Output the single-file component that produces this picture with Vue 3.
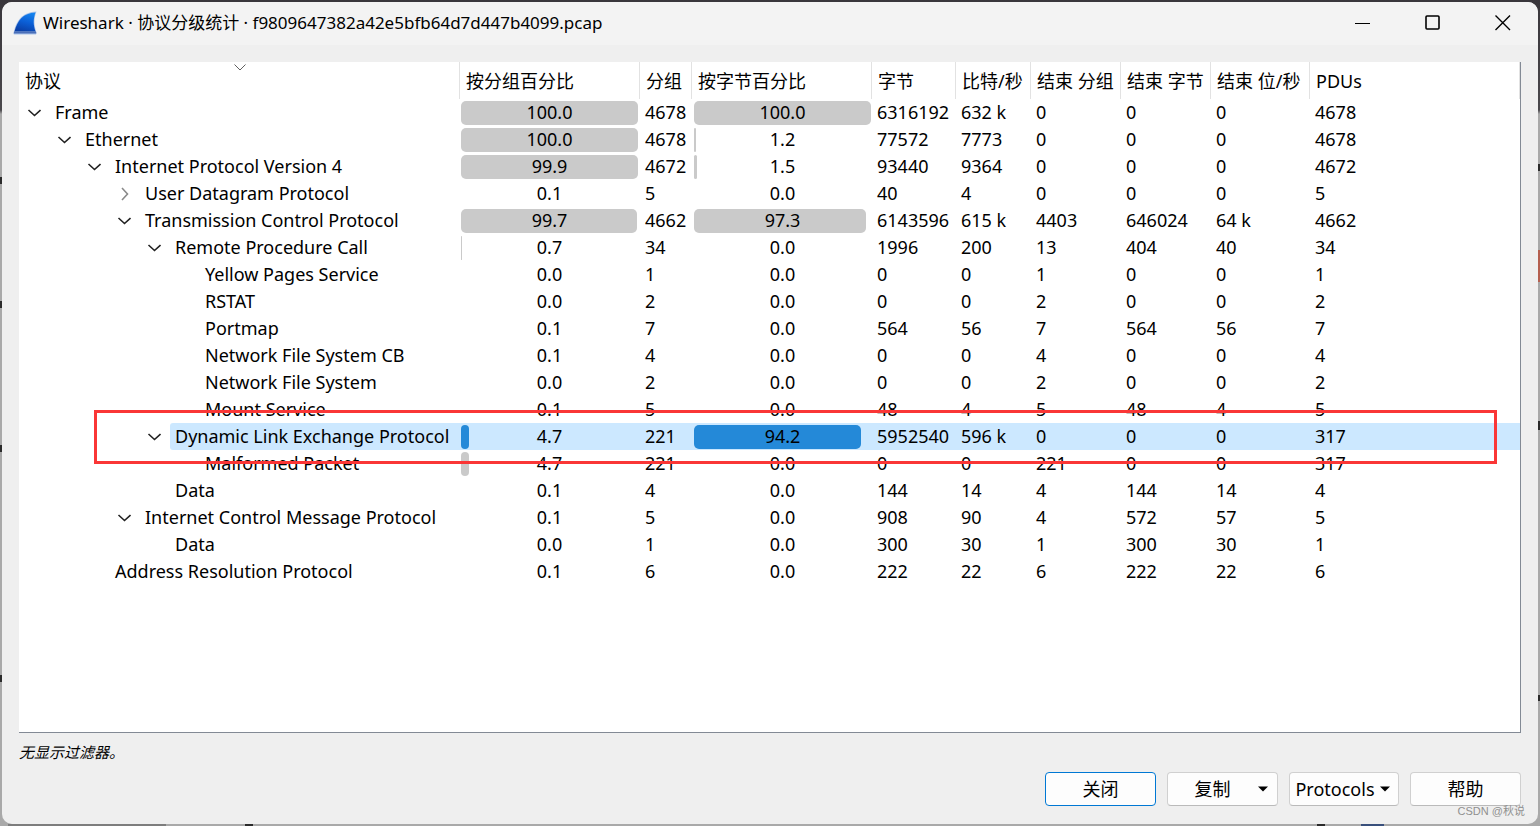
<script setup>
const columns = [
  { key: 'name', label: '协议' },
  { key: 'pctPackets', label: '按分组百分比' },
  { key: 'packets', label: '分组' },
  { key: 'pctBytes', label: '按字节百分比' },
  { key: 'bytes', label: '字节' },
  { key: 'bits', label: '比特/秒' },
  { key: 'endPackets', label: '结束 分组' },
  { key: 'endBytes', label: '结束 字节' },
  { key: 'endBits', label: '结束 位/秒' },
  { key: 'pdus', label: 'PDUs' },
]

// level, state, name, packet %, packets, byte %, bytes, bits/s, end packets, end bytes, end bits/s, PDUs
const rows = [
  [0, 'open', 'Frame', '100.0', '4678', '100.0', '6316192', '632 k', '0', '0', '0', '4678'],
  [1, 'open', 'Ethernet', '100.0', '4678', '1.2', '77572', '7773', '0', '0', '0', '4678'],
  [2, 'open', 'Internet Protocol Version 4', '99.9', '4672', '1.5', '93440', '9364', '0', '0', '0', '4672'],
  [3, 'closed', 'User Datagram Protocol', '0.1', '5', '0.0', '40', '4', '0', '0', '0', '5'],
  [3, 'open', 'Transmission Control Protocol', '99.7', '4662', '97.3', '6143596', '615 k', '4403', '646024', '64 k', '4662'],
  [4, 'open', 'Remote Procedure Call', '0.7', '34', '0.0', '1996', '200', '13', '404', '40', '34'],
  [5, '', 'Yellow Pages Service', '0.0', '1', '0.0', '0', '0', '1', '0', '0', '1'],
  [5, '', 'RSTAT', '0.0', '2', '0.0', '0', '0', '2', '0', '0', '2'],
  [5, '', 'Portmap', '0.1', '7', '0.0', '564', '56', '7', '564', '56', '7'],
  [5, '', 'Network File System CB', '0.1', '4', '0.0', '0', '0', '4', '0', '0', '4'],
  [5, '', 'Network File System', '0.0', '2', '0.0', '0', '0', '2', '0', '0', '2'],
  [5, '', 'Mount Service', '0.1', '5', '0.0', '48', '4', '5', '48', '4', '5'],
  [4, 'open', 'Dynamic Link Exchange Protocol', '4.7', '221', '94.2', '5952540', '596 k', '0', '0', '0', '317'],
  [5, '', 'Malformed Packet', '4.7', '221', '0.0', '0', '0', '221', '0', '0', '317'],
  [4, '', 'Data', '0.1', '4', '0.0', '144', '14', '4', '144', '14', '4'],
  [3, 'open', 'Internet Control Message Protocol', '0.1', '5', '0.0', '908', '90', '4', '572', '57', '5'],
  [4, '', 'Data', '0.0', '1', '0.0', '300', '30', '1', '300', '30', '1'],
  [2, '', 'Address Resolution Protocol', '0.1', '6', '0.0', '222', '22', '6', '222', '22', '6'],
].map(([level, state, name, ...values]) => ({ level, state, name, values }))

const selected = 12
const isPercent = (i) => i === 0 || i === 2
const barWidth = (v) => (Number(v) < 0.5 ? '0' : v + '%')
</script>

<template>
  <div class="desktop">
    <main class="window">
      <header class="titlebar">
        <svg class="logo" viewBox="0 0 24 24" aria-hidden="true">
          <defs>
            <linearGradient id="fin" x1="0.7" y1="0" x2="0.4" y2="1">
              <stop offset="0" stop-color="#1583ee" />
              <stop offset="0.5" stop-color="#0b5fd6" />
              <stop offset="1" stop-color="#0a3fa6" />
            </linearGradient>
          </defs>
          <path d="M0.5 22.5C3 10 9 1 23.5 0.5C20.5 8 21 14 23.5 21.5L23 23.5H1Z" fill="#a9c3ea" />
          <path d="M1.5 20.5C4.5 9.5 10 2 22.5 1.5C20 8.5 20.3 14 22.5 20.5Z" fill="url(#fin)" />
          <path d="M1 20.5H23L23.3 22.5H0.8Z" fill="#4b6fb8" />
        </svg>
        <h1>Wireshark · 协议分级统计 · f9809647382a42e5bfb64d7d447b4099.pcap</h1>
        <div class="controls">
          <button type="button" aria-label="最小化">
            <svg viewBox="0 0 16 16"><path d="M0 8.5H15" /></svg>
          </button>
          <button type="button" aria-label="最大化">
            <svg viewBox="0 0 16 16"><rect x="1" y="1" width="13" height="13" rx="1" stroke-width="1.6" /></svg>
          </button>
          <button type="button" aria-label="关闭窗口">
            <svg viewBox="0 0 16 16"><path d="M0.5 0.5L15 15M15 0.5L0.5 15" stroke-width="1.4" /></svg>
          </button>
        </div>
      </header>

      <section class="content">
        <div class="tree">
          <table>
            <colgroup>
              <col v-for="c in columns" :key="c.key" :class="c.key" />
            </colgroup>
            <thead>
              <tr>
                <th v-for="(c, i) in columns" :key="c.key" scope="col">
                  <span>{{ c.label }}</span>
                  <svg v-if="i === 0" class="sort" viewBox="0 0 12 7" aria-hidden="true">
                    <path d="M0.5 0.5L6 6L11.5 0.5" />
                  </svg>
                </th>
              </tr>
            </thead>
            <tbody>
              <tr v-for="(row, r) in rows" :key="r" :class="{ selected: r === selected }">
                <td class="protocol">
                  <div class="node" :class="'level-' + row.level">
                    <button v-if="row.state" type="button" :class="row.state" :aria-label="row.name" :aria-expanded="row.state === 'open'">
                      <svg viewBox="0 0 14 14" aria-hidden="true">
                        <path v-if="row.state === 'open'" d="M1.5 4L7.5 9.5L13.500 4" />
                        <path v-else d="M5 1L10.5 7L5 13" />
                      </svg>
                    </button>
                    <span v-else class="leaf"></span>
                    <span class="name">{{ row.name }}</span>
                  </div>
                </td>
                <td v-for="(v, i) in row.values" :key="i" :class="{ percent: isPercent(i), second: i === 2 }">
                  <div v-if="isPercent(i)" class="meter">
                    <div class="bar" :style="{ width: barWidth(v) }"></div>
                    <span>{{ v }}</span>
                  </div>
                  <template v-else>{{ v }}</template>
                </td>
              </tr>
            </tbody>
          </table>
          <div class="marker"></div>
        </div>

        <p class="note">无显示过滤器。</p>

        <footer class="actions">
          <button type="button" class="primary">关闭</button>
          <button type="button" class="menu wide">
            <span>复制</span>
            <svg viewBox="0 0 10 6" aria-hidden="true"><path d="M0 0.5H10L5 5.5Z" /></svg>
          </button>
          <button type="button" class="menu narrow">
            <span>Protocols</span>
            <svg viewBox="0 0 10 6" aria-hidden="true"><path d="M0 0.5H10L5 5.5Z" /></svg>
          </button>
          <button type="button">帮助</button>
        </footer>
      </section>
      <div class="watermark">CSDN @秋说</div>
    </main>
  </div>
</template>

<style>
body {
  background: #9c9c9c;
}
</style>

<style scoped>
.desktop {
  box-sizing: border-box;
  min-height: 100vh;
  padding: 2px;
  display: flex;
  background:
    linear-gradient(#2b2b2b, #2b2b2b) 0 177px / 2px 7px no-repeat,
    linear-gradient(#2b2b2b, #2b2b2b) 0 301px / 2px 7px no-repeat,
    linear-gradient(#2b2b2b, #2b2b2b) 0 445px / 2px 7px no-repeat,
    linear-gradient(#2b2b2b, #2b2b2b) 0 675px / 2px 7px no-repeat,
    linear-gradient(#2b2b2b, #2b2b2b) 100% 164px / 2px 7px no-repeat,
    linear-gradient(#b5604f, #b5604f) 100% 250px / 2px 32px no-repeat,
    linear-gradient(#2b2b2b, #2b2b2b) 100% 421px / 2px 9px no-repeat,
    linear-gradient(#2b2b2b, #2b2b2b) 100% 695px / 2px 6px no-repeat,
    linear-gradient(#2b2b2b, #2b2b2b) 245px 100% / 8px 2px no-repeat,
    linear-gradient(#2b2b2b, #2b2b2b) 1317px 100% / 8px 2px no-repeat,
    linear-gradient(#39507c, #39507c) 1361px 100% / 23px 2px no-repeat,
    linear-gradient(#7d7d7d, #7d7d7d) 8px 100% / 158px 2px no-repeat,
    linear-gradient(#39363b 0, #4a484c 110px, #a9a9a9 114px, #a9a9a9 100%);
  font-family: "Noto Sans", "Noto Sans CJK SC", sans-serif;
  font-size: 18px;
  line-height: 27px;
  color: #000;
}
.window {
  position: relative;
  flex: 1;
  min-width: 0;
  display: flex;
  flex-direction: column;
  border-radius: 10px;
  overflow: hidden;
  background: #efefef;
}
button {
  font: inherit;
  color: inherit;
  padding: 0;
}
.titlebar {
  box-sizing: border-box;
  height: 43px;
  display: flex;
  align-items: center;
  padding: 0 0 2px 11px;
  background: #f3f3f3;
}
.logo {
  width: 24px;
  height: 24px;
}
h1 {
  flex: 1;
  margin: 0 0 0 6px;
  font-size: 17px;
  line-height: 24px;
  font-weight: 400;
  white-space: nowrap;
}
.controls {
  display: flex;
}
.controls button {
  width: 70px;
  height: 40px;
  display: grid;
  place-items: center;
  border: 0;
  background: none;
}
.controls svg {
  width: 16px;
  height: 16px;
  fill: none;
  stroke: #000;
}
.content {
  flex: 1;
  display: flex;
  flex-direction: column;
  padding: 17px 17px 18px;
}
.tree {
  position: relative;
  flex: 1;
  background: #fff;
  border-right: 1px solid #838a95;
  border-bottom: 1px solid #838a95;
}
table {
  width: 100%;
  table-layout: fixed;
  border-collapse: separate;
  border-spacing: 0;
}
col.name { width: 441px; }
col.pctPackets, col.pctBytes { width: 180px; }
col.packets { width: 52px; }
col.bytes { width: 84px; }
col.bits { width: 75px; }
col.endPackets, col.endBytes { width: 90px; }
col.endBits { width: 99px; }
th {
  box-sizing: border-box;
  position: relative;
  height: 37px;
  padding: 2px 0 0 6px;
  border-right: 1px solid #e2e2e2;
  font-weight: 400;
  text-align: left;
  white-space: nowrap;
}
.sort {
  position: absolute;
  top: 2px;
  left: 50%;
  width: 12px;
  height: 7px;
  margin-left: -5px;
  fill: none;
  stroke: #606060;
}
td {
  height: 27px;
  padding: 0 0 0 5px;
  white-space: nowrap;
}
td.protocol {
  padding: 0;
}
td.percent {
  padding: 0 2px 0 1px;
}
td.percent.second {
  padding: 0 1px 0 2px;
}
.node {
  display: flex;
  align-items: center;
  padding-left: 8px;
}
.level-1 { padding-left: 38px; }
.level-2 { padding-left: 68px; }
.level-3 { padding-left: 98px; }
.level-4 { padding-left: 128px; }
.level-5 { padding-left: 158px; }
.node button,
.leaf {
  width: 14px;
  height: 14px;
  margin-right: 9px;
  border: 0;
  background: none;
}
.node svg {
  display: block;
  width: 14px;
  height: 14px;
  fill: none;
  stroke: #222;
  stroke-width: 1.6;
}
.node .closed svg {
  stroke: #8a8a8a;
}
.name {
  flex: 1;
  padding-left: 5px;
}
.meter {
  display: grid;
  height: 27px;
}
.meter > * {
  grid-area: 1 / 1;
}
.meter span {
  text-align: center;
}
.bar {
  height: 24px;
  margin-top: 2px;
  border-radius: 5px;
  background: #cacaca;
}
.selected td:not(.protocol),
.selected .name {
  background: #cce8ff;
}
.selected .name {
  border-radius: 3px 0 0 3px;
}
.selected .bar {
  background: #2489d8;
}
.marker {
  position: absolute;
  top: 348px;
  left: 75px;
  right: 23px;
  height: 48px;
  border: 3px solid #fa3636;
  pointer-events: none;
}
.note {
  margin: 8px 0 9px;
  font-size: 15px;
  line-height: 22px;
  font-style: italic;
}
.actions {
  display: flex;
  justify-content: flex-end;
  gap: 11px;
}
.actions button {
  width: 111px;
  height: 34px;
  border: 1px solid #d0d0d0;
  border-bottom-color: #bababa;
  border-radius: 4px;
  background: #fdfdfd;
}
.actions .primary {
  border-color: #0078d4;
}
.actions .menu {
  display: flex;
  align-items: center;
  justify-content: center;
  gap: 5px;
}
.actions .wide {
  gap: 27px;
  padding-left: 17px;
}
.actions .narrow {
  width: 110px;
  padding-right: 3px;
}
.actions svg {
  width: 10px;
  height: 6px;
}
.watermark {
  position: absolute;
  right: 13px;
  bottom: 4px;
  font-family: "Liberation Sans", "Noto Sans CJK SC", sans-serif;
  font-size: 11px;
  line-height: 18px;
  color: #8f8f8f;
}
</style>
